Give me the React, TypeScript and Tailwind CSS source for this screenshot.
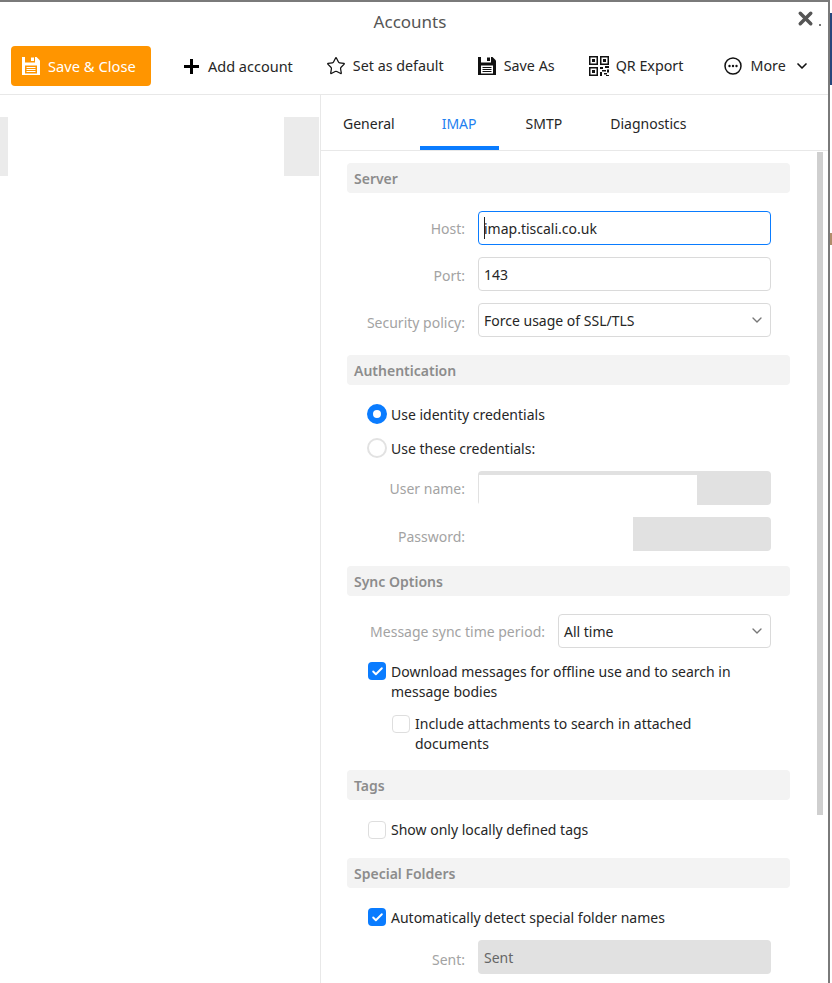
import { Check, ChevronDown, Star, X } from "lucide-react";
import type { ReactNode } from "react";

const font = "font-['Noto_Sans','Open_Sans',sans-serif]";

// line box taller than the row, drops the text 1px without growing the row
const nudge = "h-[20px] leading-[22px]";

function FloppyIcon({ fg, hole }: { fg: string; hole: string }) {
  return (
    <svg width="18" height="18" viewBox="0 0 18 18">
      <path d="M0 0h14.500l3.500 3.500V18H0z" fill={fg} />
      <rect x="3" y="0" width="10" height="5.500" fill={hole} />
      <rect x="9" y="0.500" width="3" height="3.500" fill={fg} />
      <rect x="3" y="8.500" width="12" height="8" fill={hole} />
      <rect x="4.500" y="10" width="9" height="1" fill={fg} />
      <rect x="4.500" y="12" width="9" height="1" fill={fg} />
      <rect x="4.500" y="14" width="9" height="1" fill={fg} />
    </svg>
  );
}

function PlusIcon() {
  return (
    <svg width="15" height="15" viewBox="0 0 15 15" fill="#000">
      <rect x="6" y="0" width="3" height="15" />
      <rect x="0" y="6" width="15" height="3" />
    </svg>
  );
}

function QrIcon() {
  return (
    <svg width="20" height="20" viewBox="0 0 20 20" fill="#111">
      <path d="M0 0h9v9H0zM1.500 1.500v6h6v-6z" fillRule="evenodd" />
      <rect x="3" y="3" width="3" height="3" />
      <path d="M11 0h9v9h-9zM12.500 1.500v6h6v-6z" fillRule="evenodd" />
      <rect x="14" y="3" width="3" height="3" />
      <path d="M0 11h9v9H0zM1.500 12.500v6h6v-6z" fillRule="evenodd" />
      <rect x="3" y="14" width="3" height="3" />
      <path d="M11 11h3v2h-3zM16 10h4v2h-4zM13 14h4v1.500h-4zM18 13.500h2v3h-2zM11 16h2v4h-2zM15 17h3v1.500h-3zM17 19h3v1h-3z" />
    </svg>
  );
}

function MoreIcon() {
  return (
    <svg width="18" height="18" viewBox="0 0 18 18" fill="none">
      <circle cx="9" cy="9" r="8" stroke="#111" strokeWidth="1.500" />
      <circle cx="5.500" cy="9" r="1.200" fill="#111" />
      <circle cx="9" cy="9" r="1.200" fill="#111" />
      <circle cx="12.500" cy="9" r="1.200" fill="#111" />
    </svg>
  );
}

function ToolButton({ icon, label, className }: { icon: ReactNode; label: string; className: string }) {
  return (
    <div className={`flex items-center ${className}`}>
      {icon}
      <span>{label}</span>
    </div>
  );
}

function Section({ title }: { title: string }) {
  return (
    <div className="h-[30px] rounded-[4px] bg-[#f3f3f3] pl-[7px] text-[14px] leading-[32px] font-semibold text-[#8c8c8c]">
      {title}
    </div>
  );
}

function Field({
  label,
  labelWidth = "w-[131px]",
  labelPad = "pt-[2px]",
  children,
}: {
  label: string;
  labelWidth?: string;
  labelPad?: string;
  children: ReactNode;
}) {
  return (
    <div className="flex items-center">
      <div className={`${labelWidth} ${labelPad} shrink-0 pr-[13px] text-right text-[#a3a3a3]`}>{label}</div>
      {children}
    </div>
  );
}

function Select({ value, className }: { value: string; className: string }) {
  return (
    <div className={`flex h-[34px] items-center justify-between rounded-[4px] border border-[#dadada] pr-[5px] pl-[5px] ${className}`}>
      <span className={nudge}>{value}</span>
      <ChevronDown size={16} color="#777" />
    </div>
  );
}

function Tick({ checked }: { checked: boolean }) {
  if (checked) {
    return (
      <div className="flex h-[18px] w-[18px] shrink-0 items-center justify-center rounded-[4px] bg-[#0a7cff]">
        <Check size={13} color="#fff" strokeWidth={3.500} />
      </div>
    );
  }
  return <div className="h-[18px] w-[18px] shrink-0 rounded-[4px] border border-[#dedede]" />;
}

export default function App() {
  return (
    <div className={`${font} relative h-[983px] w-[832px] overflow-hidden bg-white text-[14px] leading-[20px] text-[#262626]`}>
      <div className="flex h-[983px] w-[830px] flex-col border-t-2 border-r-2 border-[#7a7a7a]">
        {/* Title */}
        <div className="relative h-[36px] shrink-0 pt-[8px] pr-[8px] text-center text-[17px] leading-[24px] text-[#555]">
          Accounts
          <X size={21} color="#555" strokeWidth={4} className="absolute top-[6px] right-[12px]" />
          <span className="absolute top-[22px] right-[7px] h-[2px] w-[2px] bg-[#777]" />
        </div>

        {/* Toolbar */}
        <div className="flex h-[57px] shrink-0 items-start border-b border-[#e8e8e8] pt-[8px] pl-[11px]">
          <div className="flex h-[40px] w-[140px] items-center gap-[8px] rounded-[4px] bg-[#ff9500] pl-[11px] text-[14.700px] text-white">
            <FloppyIcon fg="#fff" hole="#ff9500" />
            <span>Save &amp; Close</span>
          </div>
          <div className="flex h-[40px] items-center text-[14.300px]">
            <ToolButton className="ml-[33px] gap-[9px] text-[14.500px]" icon={<PlusIcon />} label="Add account" />
            <ToolButton className="ml-[33px] gap-[7px]" icon={<Star size={20} color="#111" strokeWidth={1.500} />} label="Set as default" />
            <ToolButton className="ml-[34px] gap-[8px]" icon={<FloppyIcon fg="#111" hole="#fff" />} label="Save As" />
            <ToolButton className="ml-[34px] gap-[7px]" icon={<QrIcon />} label="QR Export" />
            <ToolButton className="ml-[41px] gap-[8px]" icon={<MoreIcon />} label="More" />
            <ChevronDown size={16} color="#111" strokeWidth={2.500} className="ml-[8px]" />
          </div>
        </div>

        <div className="flex min-h-0 flex-1">
          {/* Account list side, content has not painted */}
          <div className="flex h-full w-[320px] shrink-0 items-start justify-between pt-[22px] pr-[1px]">
            <div className="h-[59px] w-[8px] bg-[#ebebeb]" />
            <div className="h-[59px] w-[35px] bg-[#ebebeb]" />
          </div>

          {/* Settings */}
          <div className="flex min-w-0 flex-1 flex-col border-l border-[#e8e8e8]">
            <div className="flex h-[56px] shrink-0 border-b border-[#e8e8e8] pl-[22px]">
              <div className="pt-[19px]">General</div>
              <div className="relative ml-[25px] w-[79px] pt-[19px] text-center text-[#1e7ff0]">
                IMAP
                <div className="absolute right-0 bottom-0 left-0 h-[4px] bg-[#0a7cff]" />
              </div>
              <div className="ml-[27px] pt-[19px]">SMTP</div>
              <div className="ml-[48px] pt-[19px]">Diagnostics</div>
            </div>

            <div className="relative min-h-0 flex-1 overflow-hidden pt-[12px] pl-[26px]">
              <div className="absolute top-[1px] right-[5px] h-[663px] w-[6px] bg-[#cfcfcf]" />
              <div className="w-[443px]">
                <Section title="Server" />
                <div className="flex flex-col gap-[12px] pt-[18px]">
                  <Field label="Host:">
                    <div className="flex h-[34px] w-[293px] items-center rounded-[4px] border border-[#0a7cff] pl-[5px]">
                      <span className="mr-[-1px] h-[22px] w-px bg-[#222]" />
                      <span className={nudge}>imap.tiscali.co.uk</span>
                    </div>
                  </Field>
                  <Field label="Port:" labelPad="pt-[4px]">
                    <div className="flex h-[34px] w-[293px] items-center rounded-[4px] border border-[#dadada] pl-[5px]">
                      <span className={nudge}>143</span>
                    </div>
                  </Field>
                  <Field label="Security policy:" labelPad="pt-[6px]">
                    <Select value="Force usage of SSL/TLS" className="w-[293px]" />
                  </Field>
                </div>

                <div className="mt-[18px]">
                  <Section title="Authentication" />
                </div>
                <div className="flex items-center gap-[4px] pt-[19px] pl-[20px]">
                  <div className="h-[20px] w-[20px] shrink-0 rounded-full border-[6px] border-[#0a7cff]" />
                  <span className={nudge}>Use identity credentials</span>
                </div>
                <div className="flex items-center gap-[4px] pt-[14px] pl-[20px]">
                  <div className="h-[20px] w-[20px] shrink-0 rounded-full border-2 border-[#e2e2e2]" />
                  <span className={nudge}>Use these credentials:</span>
                </div>
                <div className="flex flex-col gap-[12px] pt-[13px]">
                  <Field label="User name:">
                    <div className="relative h-[34px] w-[293px] rounded-[4px] bg-[#e1e1e1]">
                      <div className="absolute top-[4px] bottom-0 left-px w-[218px] bg-white" />
                    </div>
                  </Field>
                  <Field label="Password:" labelPad="pt-[6px]">
                    <div className="flex h-[34px] w-[293px] justify-end">
                      <div className="h-[34px] w-[138px] rounded-r-[4px] bg-[#e1e1e1]" />
                    </div>
                  </Field>
                </div>

                <div className="mt-[15px]">
                  <Section title="Sync Options" />
                </div>
                <div className="pt-[18px]">
                  <Field label="Message sync time period:" labelWidth="w-[211px]">
                    <Select value="All time" className="w-[213px]" />
                  </Field>
                </div>
                <div className="flex items-start gap-[5px] pt-[13px] pl-[21px]">
                  <div className="pt-px"><Tick checked /></div>
                  <span className="w-[360px] pt-px">Download messages for offline use and to search in message bodies</span>
                </div>
                <div className="flex items-start gap-[5px] pt-[12px] pl-[45px]">
                  <div className="pt-px"><Tick checked={false} /></div>
                  <span className="w-[330px]">Include attachments to search in attached documents</span>
                </div>

                <div className="mt-[16px]">
                  <Section title="Tags" />
                </div>
                <div className="flex items-center gap-[5px] pt-[20px] pl-[21px]">
                  <Tick checked={false} />
                  <span>Show only locally defined tags</span>
                </div>

                <div className="mt-[18px]">
                  <Section title="Special Folders" />
                </div>
                <div className="flex items-center gap-[5px] pt-[19px] pl-[21px]">
                  <Tick checked />
                  <span className={nudge}>Automatically detect special folder names</span>
                </div>
                <div className="pt-[13px]">
                  <Field label="Sent:" labelPad="pt-[6px]">
                    <div className="flex h-[34px] w-[293px] items-center rounded-[4px] bg-[#e1e1e1] pl-[6px] text-[#666]">
                      <span className={nudge}>Sent</span>
                    </div>
                  </Field>
                </div>
              </div>
            </div>
          </div>
        </div>
      </div>
      {/* Sliver of the window behind */}
      <div className="absolute top-[13px] right-0 h-[72px] w-[2px] bg-[#27477c]" />
      <div className="absolute top-[233px] right-0 h-[12px] w-[2px] bg-[#b08d6a]" />
    </div>
  );
}
